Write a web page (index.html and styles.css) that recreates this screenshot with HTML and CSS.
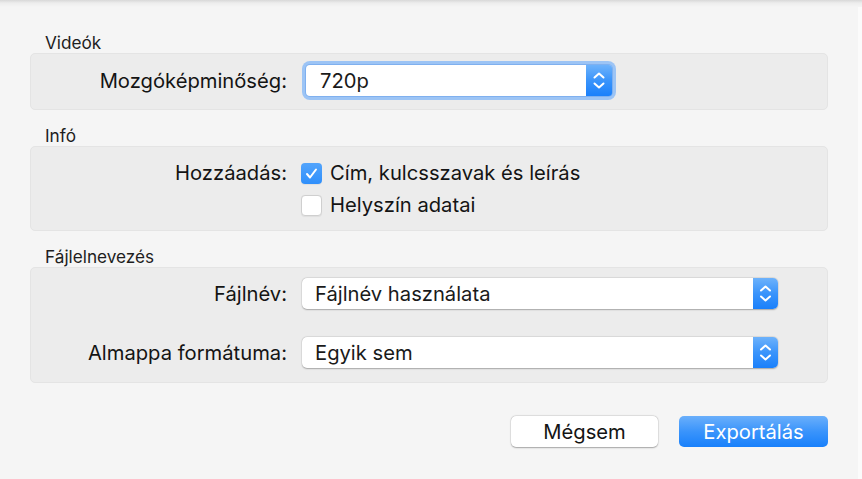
FILE: index.html
```html
<!DOCTYPE html>
<html lang="hu">
<head>
<meta charset="utf-8">
<title>Exportálás</title>
<link rel="stylesheet" href="styles.css">
</head>
<body>
<div class="window">
  <div class="section-title">Videók</div>
  <div class="box box-video">
    <div class="row">
      <div class="label">Mozgóképminőség:</div>
      <div class="popup popup-focus">
        <span class="popup-text">720p</span>
        <span class="stepper"><svg viewBox="0 0 26 31" width="26" height="31"><path d="M8.5 12.5 L13 8.5 L17.5 12.5 M8.5 18.5 L13 22.5 L17.5 18.5" fill="none" stroke="#fff" stroke-width="2" stroke-linecap="round" stroke-linejoin="round"/></svg></span>
      </div>
    </div>
  </div>

  <div class="section-title">Infó</div>
  <div class="box box-info">
    <div class="row row-check">
      <div class="label">Hozzáadás:</div>
      <div class="check-item">
        <span class="checkbox checked"><svg viewBox="0 0 21 21" width="21" height="21"><path d="M6 11 L9 14.5 L15 6.5" fill="none" stroke="#fff" stroke-width="2" stroke-linecap="round" stroke-linejoin="round"/></svg></span>
        <span class="check-text">Cím, kulcsszavak és leírás</span>
      </div>
    </div>
    <div class="row row-check">
      <div class="label"></div>
      <div class="check-item">
        <span class="checkbox"></span>
        <span class="check-text">Helyszín adatai</span>
      </div>
    </div>
  </div>

  <div class="section-title">Fájlelnevezés</div>
  <div class="box box-file">
    <div class="row">
      <div class="label">Fájlnév:</div>
      <div class="popup popup-wide">
        <span class="popup-text">Fájlnév használata</span>
        <span class="stepper"><svg viewBox="0 0 25 31" width="25" height="31"><path d="M8 12.5 L12.5 8.5 L17 12.5 M8 18.5 L12.5 22.5 L17 18.5" fill="none" stroke="#fff" stroke-width="2" stroke-linecap="round" stroke-linejoin="round"/></svg></span>
      </div>
    </div>
    <div class="row row-gap">
      <div class="label">Almappa formátuma:</div>
      <div class="popup popup-wide">
        <span class="popup-text">Egyik sem</span>
        <span class="stepper"><svg viewBox="0 0 25 31" width="25" height="31"><path d="M8 12.5 L12.5 8.5 L17 12.5 M8 18.5 L12.5 22.5 L17 18.5" fill="none" stroke="#fff" stroke-width="2" stroke-linecap="round" stroke-linejoin="round"/></svg></span>
      </div>
    </div>
  </div>

  <div class="buttons">
    <button class="btn btn-cancel">Mégsem</button>
    <button class="btn btn-primary">Exportálás</button>
  </div>
</div>
</body>
</html>
```

FILE: styles.css
```css
html, body {
  margin: 0;
  padding: 0;
}

body {
  width: 862px;
  height: 479px;
  overflow: hidden;
  background: #f5f5f5;
  font-family: "Inter", "Roboto", "Liberation Sans", sans-serif;
  color: #1a1a1a;
}

.window {
  box-sizing: border-box;
  width: 862px;
  height: 479px;
  padding: 33px 34px 0 30px;
  background:
    linear-gradient(to bottom, #d8d8d8 0, #ededed 3px, #f5f5f5 7px, rgba(245,245,245,0) 7px),
    linear-gradient(to right, #f5f5f5 858px, #fbfbfb 858px);
}

.section-title {
  font-size: 17.2px;
  line-height: 20px;
  height: 20px;
  padding-left: 15px;
  color: #1e1e1e;
}

.box {
  box-sizing: border-box;
  background: #ececec;
  border: 1px solid #e4e4e4;
  border-radius: 5px;
  margin-bottom: 16px;
}

.box-video {
  padding: 11px 0 13px;
}

.box-info {
  padding: 10px 0 9px;
}

.box-file {
  padding: 10px 0 14px;
  margin-bottom: 0;
}

.row {
  display: grid;
  grid-template-columns: 256px auto;
  column-gap: 15px;
  align-items: center;
  height: 31px;
}

.row-check {
  height: 32px;
}

.row-gap {
  margin-top: 28px;
}

.label {
  text-align: right;
  font-size: 20.2px;
  line-height: 24px;
  color: #141414;
}

.popup {
  display: flex;
  align-items: stretch;
  height: 31px;
  box-sizing: border-box;
  background: #fff;
  border-radius: 5px;
  box-shadow: 0 0.5px 1.5px rgba(0,0,0,0.28), 0 0 0 0.5px rgba(0,0,0,0.06);
}

.popup-focus {
  width: 306px;
  margin-left: 4px;
  box-shadow: 0 0 0 1px #7fb0ef, 0 0 0 4px #9cc4f5;
  border-radius: 4px;
}

.popup-wide {
  width: 476px;
}

.popup-text {
  flex: 1;
  font-size: 20.2px;
  line-height: 31px;
  padding-left: 13px;
  color: #1a1a1a;
  white-space: nowrap;
}

.popup-focus .popup-text {
  padding-left: 14px;
}

.stepper {
  display: block;
  width: 25px;
  height: 31px;
  border-radius: 0 5px 5px 0;
  background: linear-gradient(to bottom, #6db2fb 0%, #3a94fb 50%, #1a80fb 100%);
}

.popup-focus .stepper {
  width: 26px;
  border-radius: 0 3px 3px 0;
}

.stepper svg {
  display: block;
}

.check-item {
  display: flex;
  align-items: center;
  margin-left: -1px;
}

.checkbox {
  box-sizing: border-box;
  width: 21px;
  height: 21px;
  border-radius: 4px;
  background: #fff;
  border: 1px solid #cfcfcf;
  box-shadow: 0 0.5px 1px rgba(0,0,0,0.06);
}

.checkbox.checked {
  border: none;
  background: linear-gradient(to bottom, #52a4fc, #2f8ffb);
}

.checkbox svg {
  display: block;
}

.check-text {
  margin-left: 8px;
  font-size: 20.2px;
  line-height: 24px;
  color: #141414;
}

.buttons {
  display: flex;
  justify-content: flex-end;
  gap: 21px;
  margin-top: 33px;
}

.btn {
  height: 31px;
  border: none;
  border-radius: 5px;
  font-family: inherit;
  font-size: 20.2px;
  line-height: 31px;
  padding: 0;
}

.btn-cancel {
  width: 147px;
  background: #fff;
  color: #141414;
  box-shadow: 0 0.5px 1.5px rgba(0,0,0,0.3), 0 0 0 0.5px rgba(0,0,0,0.08);
}

.btn-primary {
  width: 149px;
  color: #fff;
  background: linear-gradient(to bottom, #6aaffb 0%, #3a94fb 50%, #1880fb 100%);
}
```
